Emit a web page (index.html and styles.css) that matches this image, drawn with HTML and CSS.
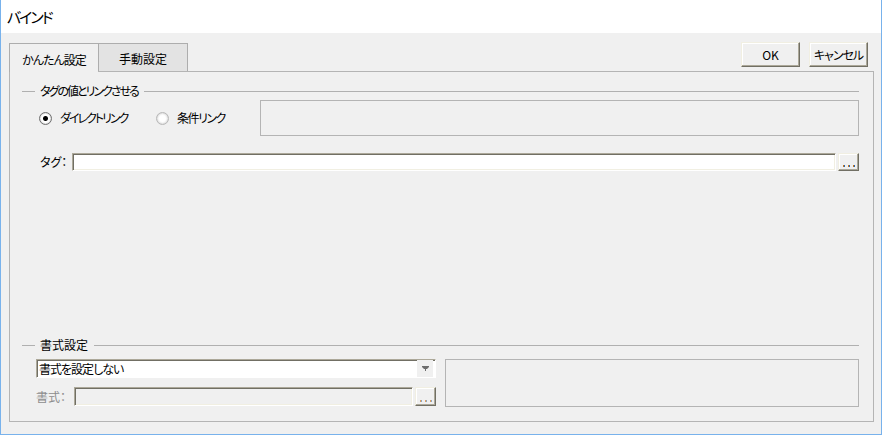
FILE: index.html
```html
<!DOCTYPE html>
<html lang="ja">
<head>
	<meta charset="UTF-8">
	<title>バインド</title>
	<link rel="stylesheet" href="styles.css">
</head>
<body>
	<div id="win">
		<div class="title">バインド</div>
		<div class="client">
			<div class="head">
				<div class="tabs">
					<div class="tab on"><span class="k1">かんたん設定</span></div>
					<div class="tab">手動設定</div>
				</div>
				<div class="btns">
					<span class="btn">OK</span>
					<span class="btn"><span class="k1">キャンセル</span></span>
				</div>
			</div>
			<div class="panel">
				<div class="grp">
					<div class="gh"><i class="ln s"></i><span class="k2">タグの値とリンクさせる</span><i class="ln"></i></div>
					<div class="radios">
						<label class="radio on"><i></i><span class="k2">ダイレクトリンク</span></label>
						<label class="radio"><i></i><span class="k15">条件リンク</span></label>
						<div class="frame"></div>
					</div>
					<div class="tagrow">
						<span class="lbl">タグ：</span>
						<div class="edit"></div>
						<span class="more"><i></i><i></i><i></i></span>
					</div>
				</div>
				<div class="grp bottom">
					<div class="gh"><i class="ln s"></i><span>書式設定</span><i class="ln"></i></div>
					<div class="fmt">
						<div class="fmtcol">
							<div class="combo">
								<span class="val k1">書式を設定しない</span>
								<span class="arrow"><svg width="7" height="5" viewBox="0 0 7 5"><polygon points="0,0 7,0 7,1 5,3 4,3 4,5 3,5 3,3 2,3 0,1" fill="#6d6d6d"/></svg></span>
							</div>
							<div class="fmtrow">
								<span class="lbl off">書式：</span>
								<div class="edit off"></div>
								<span class="more off"><i></i><i></i><i></i></span>
							</div>
						</div>
						<div class="frame big"></div>
					</div>
				</div>
			</div>
		</div>
	</div>
</body>
</html>
```

FILE: styles.css
```css
*{margin:0;padding:0;box-sizing:border-box;}
body{
	font-family:"Noto Sans CJK JP","Noto Sans",sans-serif;
	font-size:12px;
	line-height:16px;
	color:#000;
	font-feature-settings:"palt";
	background:#fff;
}
.k1{letter-spacing:-1px;}
.k15{letter-spacing:-1.5px;}
.k2{letter-spacing:-2px;}
#win{
	width:882px;
	height:435px;
	border:1px solid #78b2ec;
	border-top:0;
	display:flex;
	flex-direction:column;
}
.title{
	height:33px;
	line-height:33px;
	padding-left:6px;
	font-size:15px;
	letter-spacing:-2px;
	background:#fff;
}
.client{
	flex:1;
	background:#f0f0f0;
	padding:10px 7px 12px 8px;
	display:flex;
	flex-direction:column;
}
.head{
	height:28px;
	display:flex;
	justify-content:space-between;
	align-items:flex-start;
}
.tabs{
	display:flex;
	align-items:flex-start;
}
.tab{
	width:90px;
	height:28px;
	border:1px solid #adadad;
	border-bottom:0;
	background:#e3e3e3;
	display:flex;
	align-items:center;
	justify-content:center;
	padding-top:3px;
}
.tab.on{
	width:89px;
	height:29px;
	border-right:0;
	background:#f0f0f0;
	position:relative;
	z-index:1;
}
.btns{
	display:flex;
	gap:9px;
	margin-top:-1px;
	margin-right:6px;
}
.btn{
	width:59px;
	height:25px;
	display:flex;
	align-items:center;
	justify-content:center;
	background:#f0f0f0;
	border:1px solid;
	border-color:#f1efe2 #716f64 #716f64 #f1efe2;
	box-shadow:inset -1px -1px #aca899,inset 1px 1px #fff;
}
.panel{
	flex:1;
	border:1px solid #b4b4b4;
	padding:0 14px 14px 12px;
	display:flex;
	flex-direction:column;
}
.gh{
	height:16px;
	margin-top:11px;
	display:flex;
	align-items:center;
}
.gh .ln{
	flex:1;
	height:1px;
	background:#b0b0b0;
}
.gh .ln.s{
	flex:none;
	width:13px;
}
.gh span{
	padding:0 6px 0 5px;
}
.radios{
	height:36px;
	margin-top:1px;
	padding-left:17px;
	display:flex;
	align-items:center;
}
.radio{
	display:flex;
	align-items:center;
}
.radio.on{
	width:117px;
}
.radio i{
	width:13px;
	height:13px;
	margin-right:8px;
	border-radius:50%;
	border:1px solid #b8b8b8;
	background:radial-gradient(circle,#fff 0 3px,#f6f6f6 4px,#d6d6d6 6px);
}
.radio.on i{
	border-color:#707070;
	background:radial-gradient(circle,#000 0 2px,#fff 3px 4px,#d0d0d0 6px);
}
.frame{
	border:1px solid #b4b4b4;
}
.radios .frame{
	width:599px;
	height:36px;
	margin-left:auto;
}
.tagrow{
	height:18px;
	margin-top:17px;
	padding-left:18px;
	display:flex;
	align-items:center;
}
.lbl{
	width:32px;
	white-space:nowrap;
}
.edit{
	flex:1;
	height:100%;
	background:#fff;
	border:1px solid;
	border-color:#aca899 #fff #fff #aca899;
	box-shadow:inset 1px 1px #716f64,inset -1px -1px #f1efe2;
}
.edit.off{
	background:#f0f0f0;
}
.more{
	width:21px;
	height:100%;
	margin-left:2px;
	background:#f0f0f0;
	border:1px solid;
	border-color:#f1efe2 #716f64 #716f64 #f1efe2;
	box-shadow:inset -1px -1px #aca899,inset 1px 1px #fff;
	display:flex;
	align-items:flex-end;
	justify-content:center;
	gap:3px;
	padding-bottom:3px;
}
.more i{
	width:2px;
	height:2px;
	background:linear-gradient(90deg,#c8761c 50%,#2a68b0 50%);
}
.more.off i{
	background:linear-gradient(90deg,#e0a060 50%,#8ea6c0 50%);
}
.bottom{
	margin-top:auto;
}
.fmt{
	margin-top:6px;
	padding-left:14px;
	display:flex;
}
.fmtcol{
	width:400px;
}
.combo{
	height:19px;
	display:flex;
	background:#fff;
	border:1px solid;
	border-color:#aca899 #fff #fff #aca899;
	box-shadow:inset 1px 1px #716f64;
}
.combo .val{
	flex:1;
	padding-left:2px;
	line-height:17px;
}
.combo .arrow{
	width:16px;
	margin-right:2px;
	background:#f0f0f0;
	display:flex;
	align-items:center;
	justify-content:center;
}
.fmtrow{
	height:19px;
	margin-top:9px;
	display:flex;
	align-items:center;
}
.fmtrow .lbl{
	width:38px;
}
.lbl.off{
	color:#8d8d8d;
}
.frame.big{
	flex:1;
	height:48px;
	margin-left:9px;
}
```
